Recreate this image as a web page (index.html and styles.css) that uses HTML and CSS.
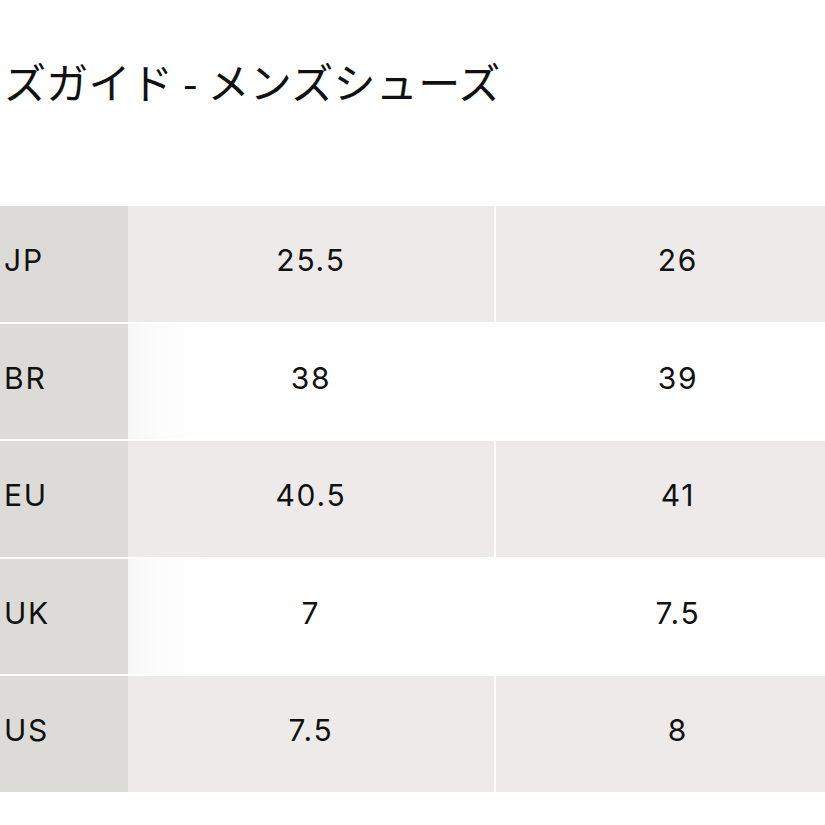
FILE: index.html
```html
<!DOCTYPE html>
<html lang="ja">
<head>
<meta charset="utf-8">
<link rel="stylesheet" href="styles.css">
</head>
<body>
<div class="page">
  <h1 class="title">ズガイド - メンズシューズ</h1>
  <table class="sizes">
    <tr class="shade"><th>JP</th><td>25.5</td><td>26</td></tr>
    <tr class="plain"><th>BR</th><td>38</td><td>39</td></tr>
    <tr class="shade"><th>EU</th><td>40.5</td><td>41</td></tr>
    <tr class="plain"><th>UK</th><td>7</td><td>7.5</td></tr>
    <tr class="shade"><th>US</th><td>7.5</td><td>8</td></tr>
  </table>
</div>
</body>
</html>
```
FILE: styles.css
```css
html, body {
  margin: 0;
  padding: 0;
  background: #ffffff;
  overflow: hidden;
}
.page {
  width: 825px;
  height: 825px;
  overflow: hidden;
}
.title {
  margin: 55px 0 0 4px;
  font-family: "Noto Sans CJK JP", sans-serif;
  font-weight: 400;
  font-size: 42px;
  line-height: 52px;
  color: #111;
  white-space: nowrap;
  letter-spacing: 0.3px;
}
.sizes {
  margin-top: 97px;
  border-collapse: separate;
  border-spacing: 0 2px;
  width: 860px;
  table-layout: fixed;
  font-family: Inter, "Liberation Sans", Arial, sans-serif;
  font-size: 30px;
  letter-spacing: 1.8px;
  color: #111;
}
.sizes th, .sizes td {
  height: 115.5px;
  padding: 0 0 7px 0;
  box-sizing: border-box;
  font-weight: 400;
}
.sizes th {
  width: 128px;
  text-align: left;
  padding-left: 4px;
  background: #dcdbd7;
}
.sizes td {
  text-align: center;
}
.sizes td + td {
  border-left: 2px solid #ffffff;
}
.shade td {
  background: #eeeae9;
}
.plain td {
  background: #ffffff;
}
.plain td:nth-child(2) {
  background: linear-gradient(to right, #f7f7f7 0, #fcfcfc 30px, #ffffff 90px);
}
```
